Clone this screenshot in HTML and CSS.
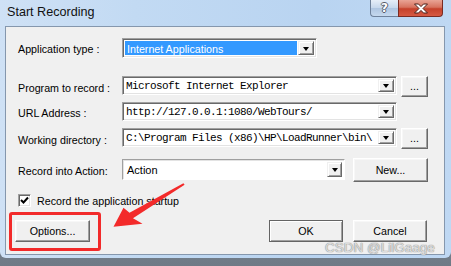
FILE: index.html
```html
<!DOCTYPE html>
<html>
<head>
<meta charset="utf-8">
<link rel="stylesheet" href="styles.css">
</head>
<body>
<div class="screen">
  <div class="window">
    <div class="titlebar">
      <span class="title">Start Recording</span>
      <div class="caption">
        <div class="cap-help"><span>?</span></div>
        <div class="cap-close">
          <svg width="16" height="11" viewBox="0 0 16 11"><path d="M1.5 1 H5.5 L8 3.6 L10.5 1 H14.5 L10 5.5 L14.5 10 H10.5 L8 7.4 L5.5 10 H1.5 L6 5.5 Z" fill="#fff" stroke="#4b1f18" stroke-width="1" stroke-linejoin="round"/></svg>
        </div>
      </div>
    </div>
    <div class="client">
      <div class="row r1">
        <span class="lbl">Application type :</span>
        <div class="combo w-app"><span class="val hl">Internet Applications</span><span class="drop"><i></i></span></div>
      </div>
      <div class="row r2">
        <span class="lbl">Program to record :</span>
        <div class="combo w-long"><span class="val mono">Microsoft Internet Explorer</span><span class="drop"><i></i></span></div>
        <div class="btn dots">...</div>
      </div>
      <div class="row r3">
        <span class="lbl">URL Address :</span>
        <div class="combo w-long"><span class="val mono">http://127.0.0.1:1080/WebTours/</span><span class="drop"><i></i></span></div>
      </div>
      <div class="row r4">
        <span class="lbl">Working directory :</span>
        <div class="combo w-long"><span class="val mono">C:\Program Files (x86)\HP\LoadRunner\bin\</span><span class="drop"><i></i></span></div>
        <div class="btn dots">...</div>
      </div>
      <div class="row r5">
        <span class="lbl">Record into Action:</span>
        <div class="combo w-action"><span class="val">Action</span><span class="drop small"><i></i></span></div>
        <div class="btn new">New...</div>
      </div>
      <div class="row r6">
        <span class="check"><svg width="9" height="9" viewBox="0 0 9 9"><path d="M1 4 L3.5 6.5 L8 1.5" fill="none" stroke="#000" stroke-width="2"/></svg></span>
        <span class="check-lbl">Record the application startup</span>
      </div>
      <div class="row r7">
        <div class="btn wide opt">Options...</div>
        <div class="btn wide ok">OK</div>
        <div class="btn wide cancel">Cancel</div>
      </div>
    </div>
  </div>
  <div class="highlight-box"></div>
  <svg class="arrow" width="451" height="266" viewBox="0 0 451 266">
    <polygon points="183.4,183.2 129.5,212.8 123.5,207.8 113.5,226.8 142.5,223.8 133,218.2 184.6,184.8" fill="#f32a2a"/>
  </svg>
  <div class="watermark">CSDN @LilGaage</div>
</div>
</body>
</html>
```
FILE: styles.css
```css
* { box-sizing: border-box; }
html, body { margin: 0; padding: 0; }
body {
  width: 451px;
  height: 266px;
  overflow: hidden;
  font-family: "Liberation Sans", Arial, sans-serif;
}
.screen {
  position: relative;
  width: 451px;
  height: 266px;
  background: linear-gradient(#a9b3bd, #6f7a86);
  overflow: hidden;
}
.window {
  width: 451px;
  height: 258px;
  background: linear-gradient(90deg, #cfe1f5 0%, #c2daf3 30%, #b9d4f1 70%, #bfd8f3 100%);
  border-radius: 0 0 6px 6px;
  display: flex;
  flex-direction: column;
}
.titlebar {
  height: 26px;
  display: flex;
  align-items: flex-start;
}
.title {
  margin: 5px 0 0 7px;
  font-size: 12.6px;
  line-height: 15px;
  color: #111;
}
.caption {
  margin-left: auto;
  margin-right: 8px;
  display: flex;
}
.cap-help {
  width: 28px;
  height: 17px;
  border: 1px solid #6e819b;
  border-top: none;
  border-right: none;
  border-radius: 0 0 0 4px;
  background: linear-gradient(#e6eef8, #c6d7ec 50%, #aec5e1 51%, #c5d8ee);
  display: flex;
  justify-content: center;
  align-items: center;
}
.cap-help span {
  font-family: "DejaVu Sans", sans-serif;
  font-weight: bold;
  font-size: 12px;
  line-height: 12px;
  color: #fff;
  text-shadow: -1px 0 #555d6a, 1px 0 #555d6a, 0 -1px #555d6a, 0 1px #555d6a;
}
.cap-close {
  width: 45px;
  height: 17px;
  border: 1px solid #7a2b22;
  border-top: none;
  border-radius: 0 0 4px 0;
  background: linear-gradient(#e9a495, #d7735f 45%, #c5412b 55%, #d65a43);
  display: flex;
  justify-content: center;
  align-items: center;
}
.client {
  margin-left: 5px;
  width: 440px;
  height: 229px;
  border: 1px solid #8597ad;
  background: #f0f0f0;
  display: flex;
  flex-direction: column;
}
.row {
  display: flex;
  align-items: flex-start;
  padding-left: 12px;
}
.r1 { margin-top: 11px; }
.r2 { margin-top: 18px; }
.r3 { margin-top: 5px; }
.r4 { margin-top: 7px; }
.r5 { margin-top: 9px; }
.r6 { margin-top: 12px; align-items: center; }
.r7 { margin-top: 13px; padding-left: 9px; }
.lbl {
  width: 104px;
  align-self: center;
  padding-top: 2px;
  font-size: 10.7px;
  color: #000;
  white-space: nowrap;
}
.combo {
  height: 19px;
  display: flex;
  background: #fff;
  border: 1px solid;
  border-color: #a0a0a0 #fff #fff #a0a0a0;
  box-shadow: inset 1px 1px #696969, inset -1px -1px #e3e3e3;
  padding: 2px 2px 2px 2px;
}
.w-app { width: 195px; height: 20px; }
.w-long { width: 275px; }
.w-action {
  width: 223px;
  height: 21px;
  margin-top: 1px;
  border-color: #a0a0a0 #fff #fff #a0a0a0;
  box-shadow: inset 1px 1px #e3e3e3;
}
.val {
  flex: 1;
  white-space: nowrap;
  overflow: hidden;
  font-size: 10.7px;
  line-height: 15px;
  padding-left: 1px;
  color: #000;
}
.val.hl {
  background: #3399ff;
  color: #fff;
  margin-right: 1px;
  padding-left: 2px;
  line-height: 16px;
}
.val.mono {
  font-family: "Liberation Mono", "DejaVu Sans Mono", monospace;
  font-size: 11px;
  letter-spacing: -0.6px;
  line-height: 15px;
}
.w-action .val { line-height: 17px; padding-left: 2px; font-size: 11px; }
.drop {
  width: 16px;
  height: 100%;
  background: #f0f0f0;
  border: 1px solid;
  border-color: #f0f0f0 #696969 #696969 #f0f0f0;
  box-shadow: inset 1px 1px #fff, inset -1px -1px #a0a0a0;
  display: flex;
  align-items: center;
  justify-content: center;
}
.drop.small { width: 15px; }
.drop i {
  width: 0;
  height: 0;
  border-left: 3.5px solid transparent;
  border-right: 3.5px solid transparent;
  border-top: 4px solid #000;
  margin-top: 1px;
}
.btn {
  height: 21px;
  background: #f0f0f0;
  border: 1px solid;
  border-color: #fff #696969 #696969 #fff;
  box-shadow: inset -1px -1px #a0a0a0, inset 1px 1px #f7f7f7;
  display: flex;
  align-items: center;
  justify-content: center;
  font-size: 10.7px;
  color: #000;
}
.dots {
  width: 27px;
  margin-left: 4px;
  padding-bottom: 1px;
}
.new {
  width: 75px;
  height: 24px;
  margin-left: 8px;
}
.wide {
  width: 75px;
  height: 22px;
}
.ok {
  margin-left: 179px;
  width: 74px;
  border-color: #646464;
  box-shadow: inset 1px 1px #fff, inset -1px -1px #a0a0a0;
}
.cancel {
  margin-left: 10px;
  width: 74px;
}
.check {
  width: 13px;
  height: 13px;
  background: #fff;
  border: 1px solid;
  border-color: #a0a0a0 #fff #fff #a0a0a0;
  box-shadow: inset 1px 1px #696969, inset -1px -1px #e3e3e3;
  display: flex;
  align-items: center;
  justify-content: center;
}
.check-lbl {
  margin-left: 6px;
  font-size: 10.7px;
  color: #000;
}
.highlight-box {
  position: absolute;
  left: 9px;
  top: 212px;
  width: 92px;
  height: 39px;
  border: 3px solid #f22a2a;
  border-radius: 3px;
}
.arrow {
  position: absolute;
  left: 0;
  top: 0;
}
.watermark {
  position: absolute;
  left: 325px;
  top: 240px;
  font-size: 13.5px;
  line-height: 16px;
  color: rgba(235, 235, 235, 0.85);
  text-shadow: 0 0 1px #8a8a8a, 0 0 1px #8a8a8a;
  white-space: nowrap;
}
```
